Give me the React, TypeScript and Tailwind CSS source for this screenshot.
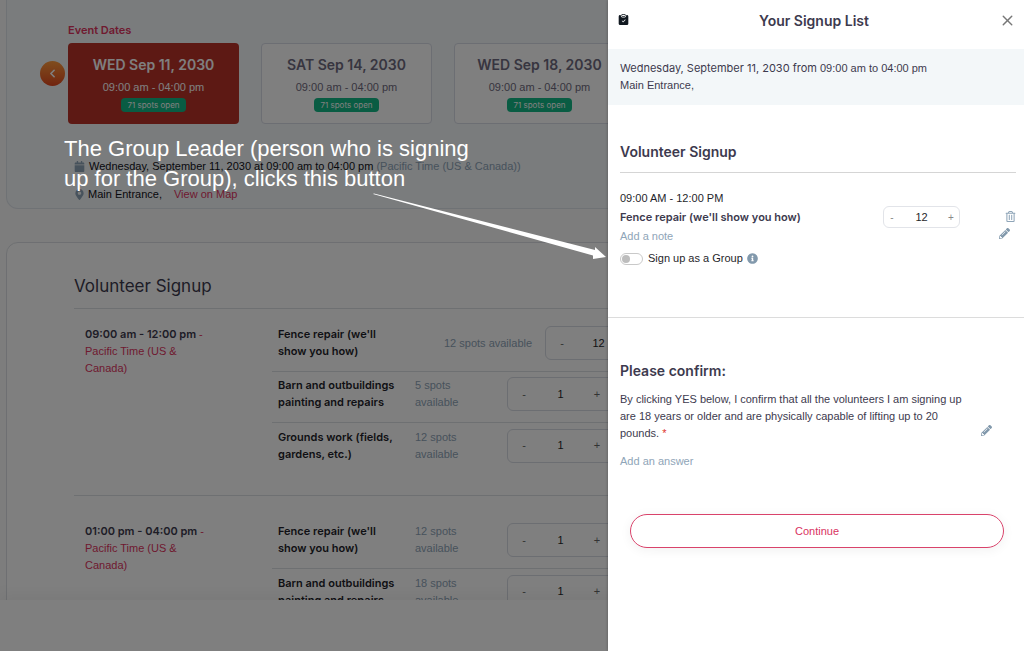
import { useState } from 'react';
import { ChevronLeft, X } from 'lucide-react';
import { BsClipboardCheckFill } from 'react-icons/bs';
import { FaCalendar, FaInfoCircle, FaMapMarkerAlt, FaPencilAlt, FaRegTrashAlt } from 'react-icons/fa';

const dates = [
  { day: 'WED Sep 11, 2030', active: true },
  { day: 'SAT Sep 14, 2030', active: false },
  { day: 'WED Sep 18, 2030', active: false },
];

type Job = { name: string; spots: string; qty: number; wide?: boolean };

const shifts: { time: string; pad: string; jobs: Job[] }[] = [
  {
    time: '09:00 am - 12:00 pm',
    pad: 'pt-3 pb-[21px]',
    jobs: [
      { name: "Fence repair (we'll show you how)", spots: '12 spots available', qty: 12, wide: true },
      { name: 'Barn and outbuildings painting and repairs', spots: '5 spots available', qty: 1 },
      { name: 'Grounds work (fields, gardens, etc.)', spots: '12 spots available', qty: 1 },
    ],
  },
  {
    time: '01:00 pm - 04:00 pm',
    pad: 'pt-[22px] pb-[21px]',
    jobs: [
      { name: "Fence repair (we'll show you how)", spots: '12 spots available', qty: 1 },
      { name: 'Barn and outbuildings painting and repairs', spots: '18 spots available', qty: 1 },
    ],
  },
];

function Stepper({ start, label, small }: { start: number; label: string; small?: boolean }) {
  const [qty, setQty] = useState(start);
  return (
    <div
      className={
        small
          ? 'flex h-[22px] w-[77px] items-center rounded-md border border-[#e2e4e9] bg-white px-1'
          : 'flex h-[34px] w-[107px] shrink-0 items-center rounded-md border border-[#d8dce4] bg-white px-2'
      }
    >
      <button aria-label="Less" onClick={() => setQty(Math.max(0, qty - 1))} className={small ? 'w-2 text-[10px] text-[#888]' : 'w-4 text-[11px] text-[#666]'}>
        -
      </button>
      <input
        aria-label={label}
        value={qty}
        onChange={(e) => setQty(Number(e.target.value) || 0)}
        className="w-0 flex-1 bg-transparent text-center text-[11px] text-[#1f1f2b] outline-none"
      />
      <button aria-label="More" onClick={() => setQty(qty + 1)} className={small ? 'w-2 text-[10px] text-[#888]' : 'w-4 text-[11px] text-[#666]'}>
        +
      </button>
    </div>
  );
}

function EventCard() {
  return (
    <section className="mx-1.5 rounded-b-xl border border-t-0 border-[#dfe4ea] bg-[#f4f8fb] pt-[22px] pb-1.5">
      <h2 className="ml-[61px] font-['Inter'] text-[11px] leading-4 font-semibold text-[#e0355f]">Event Dates</h2>
      <div className="mt-[5px] ml-[33px] flex items-center">
        <button
          aria-label="Previous dates"
          className="mr-[3px] mb-5 flex size-[25px] shrink-0 items-center justify-center rounded-full bg-linear-to-b from-[#ff9a3c] to-[#e2471f] text-white"
        >
          <ChevronLeft size={13} strokeWidth={3} />
        </button>
        <div className="flex gap-[22px]">
          {dates.map((d) => (
            <button
              key={d.day}
              className={
                d.active
                  ? 'flex h-[81px] w-[171px] shrink-0 flex-col items-center rounded-sm bg-[#bb3329] pt-3 text-white'
                  : 'flex h-[81px] w-[171px] shrink-0 flex-col items-center rounded-sm border border-[#d8dce6] bg-white pt-[11px] text-[#6f6b80]'
              }
            >
              <span className="font-['Inter'] text-sm leading-5 font-semibold">{d.day}</span>
              <span className="mt-1 text-[11px] leading-[17px]">09:00 am - 04:00 pm</span>
              <span className="mt-0.5 rounded-sm bg-[#12b886] px-1.5 font-['Inter'] text-[8px] leading-[14px] text-white">71 spots open</span>
            </button>
          ))}
        </div>
      </div>
      <div className="mt-[34px] ml-[67px] flex items-center gap-1 text-[11px] leading-4 text-[#111118]">
        <FaCalendar className="text-[#8fa5b8]" />
        <span>
          Wednesday, September 11, 2030 at 09:00 am to 04:00 pm <span className="text-[#8fa5b8]">(Pacific Time (US &amp; Canada))</span>
        </span>
      </div>
      <div className="mt-3 ml-[67px] flex items-center text-[11px] leading-4 text-[#111118]">
        <FaMapMarkerAlt className="mr-[3px] text-[#8fa5b8]" />
        <span>Main Entrance,</span>
        <a href="#map" className="ml-3 text-[#e0355f]">View on Map</a>
      </div>
    </section>
  );
}

function SignupCard() {
  return (
    <section className="mx-1.5 mt-[33px] rounded-xl border border-[#dcdfe4] bg-white pt-8 pl-[67px]">
      <h2 className="border-b border-[#dde0e4] pb-[11px] font-['Inter'] text-[17px] leading-[22px] text-[#3d3a4e]">Volunteer Signup</h2>
      {shifts.map((s) => (
        <div key={s.time} className={`flex border-b border-[#dde0e4] ${s.pad}`}>
          <p className="ml-[11px] w-[187px] shrink-0 pt-[5px] pr-14 text-[11px] leading-[17px] text-[#e0355f]">
            <span className="font-['Inter'] font-semibold whitespace-nowrap text-[#3d3a4e]">{s.time}</span> - Pacific Time (US &amp; Canada)
          </p>
          <ul className="flex-1">
            {s.jobs.map((j) => (
              <li key={j.name} className="flex h-[51px] items-center border-b border-[#dde0e4] pb-1.5 pl-1.5 text-[11px] leading-[17px] last:border-b-0">
                <span className="w-[137px] shrink-0 pr-3 font-['Inter'] font-semibold text-[#1f1f2b]">{j.name}</span>
                <span className={j.wide ? 'w-[130px] shrink-0 pl-[29px] whitespace-nowrap text-[#8fa5b8]' : 'w-[92px] shrink-0 pr-8 text-[#8fa5b8]'}>{j.spots}</span>
                <Stepper start={j.qty} label={j.name} />
              </li>
            ))}
          </ul>
        </div>
      ))}
    </section>
  );
}

function Drawer() {
  const [group, setGroup] = useState(false);
  return (
    <aside className="absolute inset-y-0 right-0 w-[416px] bg-white text-[11px] leading-[17px] text-[#3d3a4e] shadow-[0_0_3px_rgba(0,0,0,0.3)]">
      <header className="flex h-[49px] items-start justify-between pt-3 pr-2 pl-2.5">
        <BsClipboardCheckFill size={11} className="mt-0.5 text-[#111820]" />
        <h1 className="font-['Inter'] text-sm leading-[18px] font-semibold">Your Signup List</h1>
        <button aria-label="Close" className="text-[#777]">
          <X size={17} strokeWidth={2} />
        </button>
      </header>
      <div className="bg-[#f3f7f9] py-[11px] pl-3">
        <p>
          <span className="font-['Inter']">Wednesday, September 11, 2030 from</span> 09:00 am to 04:00 pm
        </p>
        <p>Main Entrance,</p>
      </div>

      <section className="h-[213px] border-b border-[#dcdcdc] pt-[38px] pr-2 pl-3">
        <h2 className="border-b border-[#d5d5d5] pb-[11px] font-['Inter'] text-sm leading-[18px] font-semibold">Volunteer Signup</h2>
        <div className="mt-[17px] flex">
          <div className="w-[263px]">
            <p className="text-[#1f1f2b]">09:00 AM - 12:00 PM</p>
            <p className="mt-0.5 font-['Inter'] font-semibold">Fence repair (we'll show you how)</p>
            <button className="mt-0.5 block text-[#8fa5b8]">Add a note</button>
            <label className="mt-[5px] flex items-center text-[#1f1f2b]">
              <input type="checkbox" className="peer sr-only" checked={group} onChange={(e) => setGroup(e.target.checked)} />
              <span className="mr-[5px] flex h-3 w-[23px] items-center rounded-full border border-[#c9c9c9] px-px peer-checked:justify-end">
                <span className="size-2 rounded-full bg-[#bdbdbd]" />
              </span>
              Sign up as a Group
              <FaInfoCircle className="ml-1 text-[#8299ac]" />
            </label>
          </div>
          <div className="mt-4">
            <Stepper start={12} label="Fence repair spots" small />
          </div>
          <div className="mt-[21px] ml-auto flex flex-col items-end gap-1.5">
            <button aria-label="Remove" className="text-[#8fa5b8]">
              <FaRegTrashAlt size={11} />
            </button>
            <button aria-label="Edit note" className="mr-1.5 text-[#8299ac]">
              <FaPencilAlt size={11} />
            </button>
          </div>
        </div>
      </section>

      <section className="px-3 pt-11">
        <h2 className="font-['Inter'] text-sm leading-[18px] font-semibold">Please confirm:</h2>
        <div className="mt-[11px] flex items-end">
          <p className="w-[361px] pr-2">
            By clicking YES below, I confirm that all the volunteers I am signing up are 18 years or older and are physically capable of lifting up to 20 pounds. <span className="text-[#e0352f]">*</span>
          </p>
          <button aria-label="Edit answer" className="mb-1.5 text-[#8299ac]">
            <FaPencilAlt size={11} />
          </button>
        </div>
        <button className="mt-[11px] block text-[#8fa5b8]">Add an answer</button>
      </section>
      <div className="mt-11 pr-5 pl-[22px]">
        <button className="h-[34px] w-full rounded-full border border-[#d9436b] text-[#d9335f] shadow-[0_2px_12px_rgba(0,0,0,0.06)]">Continue</button>
      </div>
    </aside>
  );
}

export default function App() {
  return (
    <div className="relative flex h-screen flex-col overflow-hidden bg-[#fafafa] font-['Liberation_Sans',sans-serif]">
      <main className="min-h-0 flex-1 overflow-hidden">
        <EventCard />
        <SignupCard />
      </main>
      <footer className="h-[51px] shrink-0 bg-white shadow-[0_-4px_16px_rgba(0,0,0,0.06)]" />

      <div className="absolute inset-0 bg-black/50" />
      <Drawer />

      {/* callout that points at the group toggle */}
      <p className="absolute top-[134px] left-16 w-[430px] text-[22px] leading-[30px] text-white">
        The Group Leader (person who is signing up for the Group), clicks this button
      </p>
      <svg className="absolute top-[190px] left-[370px]" width="240" height="74" viewBox="0 0 240 74" fill="#fff">
        <path d="M3 4 L4 3.5 L225 60 L225 57 L236 67 L223 69 L223 65.5 Z" />
      </svg>
    </div>
  );
}
